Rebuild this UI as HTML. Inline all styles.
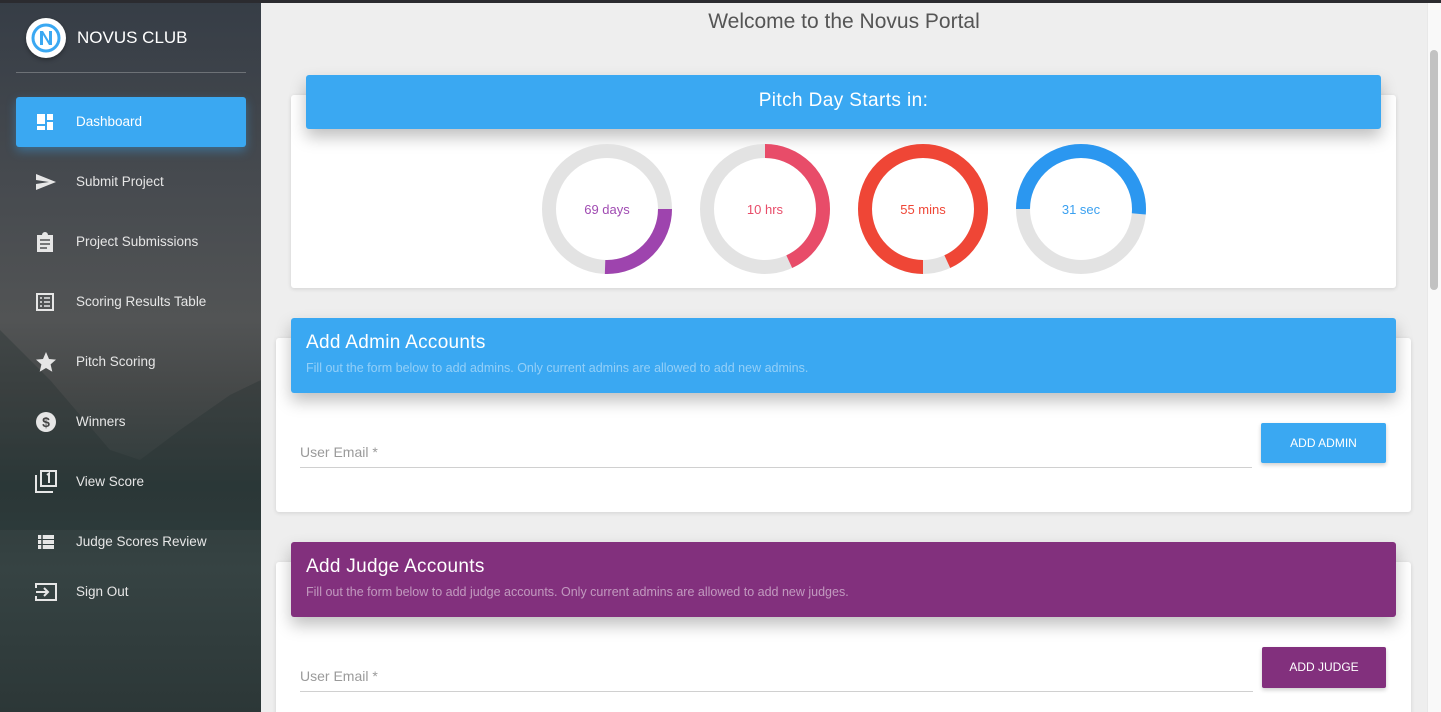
<!DOCTYPE html>
<html><head><meta charset="utf-8"><style>
*{box-sizing:border-box;margin:0;padding:0}
html,body{width:1441px;height:712px;overflow:hidden}
body{background:#eeeeee;font-family:"Liberation Sans",sans-serif;position:relative}
.topbar{position:absolute;left:0;top:0;width:1441px;height:3px;background:#2b2b2f;z-index:10}
.side{position:absolute;left:0;top:0;width:261px;height:712px;background:linear-gradient(180deg,#363d46 0%,#464a4f 25%,#525455 45%,#454848 55%,#2f3b3b 68%,#364343 80%,#2c3737 100%);overflow:hidden}
.logo{position:absolute;left:26px;top:18px;width:40px;height:40px;border-radius:50%;background:#fff;box-shadow:0 2px 4px rgba(0,0,0,.3)}
.brand{position:absolute;left:77px;top:28px;color:#fff;font-size:17px}
.hr{position:absolute;left:16px;top:72px;width:230px;height:1px;background:rgba(255,255,255,.25)}
.active{position:absolute;left:16px;top:97px;width:230px;height:50px;background:#3aa8f2;border-radius:3px;box-shadow:0 4px 10px rgba(58,168,242,.4)}
.nav{position:absolute;left:76px;color:#e6e6e6;font-size:13.5px}
.ic{position:absolute;left:35px}
.title{position:absolute;left:261px;width:1166px;top:10px;text-align:center;font-size:21px;color:#555}
.card{position:absolute;background:#fff;border-radius:3px;box-shadow:0 1px 4px rgba(0,0,0,.12)}
.hdr{position:absolute;border-radius:3px;color:#fff;box-shadow:0 8px 16px rgba(0,0,0,.25)}
.scroll{position:absolute;left:1427px;top:3px;width:14px;height:709px;background:#f9f9f9;border-left:1px solid #e8e8e8}
.thumb{position:absolute;left:1430px;top:50px;width:8px;height:240px;background:#c2c2c2;border-radius:4px}
.lbl{position:absolute;color:#9a9a9a;font-size:14px}
.line{position:absolute;height:1px;background:#d0d0d0}
.btn{position:absolute;color:#fff;font-size:12px;text-align:center;border-radius:2px;box-shadow:0 2px 4px rgba(0,0,0,.2)}
.ht{position:absolute;left:15px;top:14px;font-size:19px;letter-spacing:.3px}
</style></head><body>
<div class="topbar"></div>
<div class="side">
<svg width="261" height="712" style="position:absolute;left:0;top:0">
<polygon points="0,330 50,380 110,450 140,460 180,430 230,395 261,380 261,480 0,480" fill="#263030" opacity=".35"/>
<polygon points="0,480 261,480 261,530 0,530" fill="#203030" opacity=".3"/>
</svg>
<div class="logo"><svg width="40" height="40"><circle cx="20" cy="20" r="13" fill="none" stroke="#3aa8f2" stroke-width="3"/><path d="M14 27V13h3l6 10V13h3v14h-3l-6-10v10z" fill="#3aa8f2"/></svg></div>
<div class="brand">NOVUS CLUB</div>
<div class="hr"></div>
<div class="active"></div>
<svg class="ic" style="top:112px" width="20" height="20"><path d="M2 2h8v10H2zM12 2h6v6h-6zM12 10h6v8h-6zM2 14h8v4H2z" fill="#fff"/></svg>
<div class="nav" style="top:114px;color:#fff">Dashboard</div>
<svg class="ic" style="top:172px" width="22" height="20"><path d="M1 2l20 8-20 8 0-6 13-2-13-2z" fill="#e6e6e6"/></svg>
<div class="nav" style="top:174px">Submit Project</div>
<svg class="ic" style="top:231px" width="20" height="22"><path d="M2 4h5a3 3 0 0 1 6 0h5v17H2z" fill="#e6e6e6"/><path d="M5 9h10M5 13h10M5 17h7" stroke="#505254" stroke-width="1.6"/></svg>
<div class="nav" style="top:234px">Project Submissions</div>
<svg class="ic" style="top:292px" width="20" height="20"><rect x="2" y="2" width="16" height="16" fill="none" stroke="#e6e6e6" stroke-width="2"/><path d="M5 6h2M9 6h6M5 10h2M9 10h6M5 14h2M9 14h6" stroke="#e6e6e6" stroke-width="1.6"/></svg>
<div class="nav" style="top:294px">Scoring Results Table</div>
<svg class="ic" style="top:351px" width="22" height="22"><path d="M11 1l3 7 7 .6-5.4 4.8 1.7 7.4L11 17l-6.3 3.8 1.7-7.4L1 8.6 8 8z" fill="#e6e6e6"/></svg>
<div class="nav" style="top:354px">Pitch Scoring</div>
<svg class="ic" style="top:411px" width="22" height="22"><circle cx="11" cy="11" r="10" fill="#e6e6e6"/><text x="11" y="16" text-anchor="middle" font-size="14" font-weight="bold" fill="#444" font-family="Liberation Sans">$</text></svg>
<div class="nav" style="top:414px">Winners</div>
<svg class="ic" style="top:470px" width="22" height="24"><path d="M1 5v17h17" fill="none" stroke="#e6e6e6" stroke-width="2"/><rect x="6" y="1" width="15" height="15" fill="none" stroke="#e6e6e6" stroke-width="2"/><path d="M12 5l2-1.5V13" stroke="#e6e6e6" stroke-width="2" fill="none"/></svg>
<div class="nav" style="top:474px">View Score</div>
<svg class="ic" style="top:533px" width="20" height="18"><path d="M3 2h16v4H3zM3 7h16v4H3zM3 12h16v4H3z" fill="#e6e6e6"/><path d="M7 2v14" stroke="#3a4444" stroke-width="1.5"/></svg>
<div class="nav" style="top:534px">Judge Scores Review</div>
<svg class="ic" style="top:582px" width="22" height="20"><path d="M1 6V2h20v16H1v-4" fill="none" stroke="#e6e6e6" stroke-width="2"/><path d="M1 10h11M9 6l4 4-4 4" fill="none" stroke="#e6e6e6" stroke-width="2"/></svg>
<div class="nav" style="top:584px">Sign Out</div>
</div>

<div class="title">Welcome to the Novus Portal</div>

<div class="card" style="left:291px;top:95px;width:1105px;height:193px"></div>
<div class="hdr" style="left:306px;top:75px;width:1075px;height:54px;background:#3aa8f2;text-align:center;font-size:19px;line-height:52px;letter-spacing:.4px">Pitch Day Starts in:</div>
<svg style="position:absolute;left:530px;top:130px" width="640" height="160">
<g font-family="Liberation Sans" font-size="13" text-anchor="middle">
<circle cx="77" cy="79" r="58" fill="none" stroke="#e3e3e3" stroke-width="14"/>
<circle cx="77" cy="79" r="58" fill="none" stroke="#9e44ae" stroke-width="14" stroke-dasharray="93 400"/>
<text x="77" y="84" fill="#a04bb2">69 days</text>
<circle cx="235" cy="79" r="58" fill="none" stroke="#e3e3e3" stroke-width="14"/>
<circle cx="235" cy="79" r="58" fill="none" stroke="#e84c69" stroke-width="14" stroke-dasharray="157 400" transform="rotate(-90 235 79)"/>
<text x="235" y="84" fill="#e84c69">10 hrs</text>
<circle cx="393" cy="79" r="58" fill="none" stroke="#e3e3e3" stroke-width="14"/>
<circle cx="393" cy="79" r="58" fill="none" stroke="#ef4636" stroke-width="14" stroke-dasharray="339 400" transform="rotate(90 393 79)"/>
<text x="393" y="84" fill="#ef4636">55 mins</text>
<circle cx="551" cy="79" r="58" fill="none" stroke="#e3e3e3" stroke-width="14"/>
<circle cx="551" cy="79" r="58" fill="none" stroke="#2b97f0" stroke-width="14" stroke-dasharray="187 400" transform="rotate(180 551 79)"/>
<text x="551" y="84" fill="#3aa0f0">31 sec</text>
</g></svg>

<div class="card" style="left:276px;top:338px;width:1135px;height:174px"></div>
<div class="hdr" style="left:291px;top:318px;width:1105px;height:75px;background:#3aa8f2">
<div class="ht">Add Admin Accounts</div>
<div style="position:absolute;left:15px;top:43px;font-size:12.5px;color:rgba(255,255,255,.45)">Fill out the form below to add admins. Only current admins are allowed to add new admins.</div>
</div>
<div class="lbl" style="left:300px;top:444px">User Email *</div>
<div class="line" style="left:300px;top:467px;width:952px"></div>
<div class="btn" style="left:1261px;top:423px;width:125px;height:40px;line-height:40px;background:#3aa8f2">ADD ADMIN</div>

<div class="card" style="left:276px;top:562px;width:1135px;height:160px"></div>
<div class="hdr" style="left:291px;top:542px;width:1105px;height:75px;background:#82307d">
<div class="ht">Add Judge Accounts</div>
<div style="position:absolute;left:15px;top:43px;font-size:12.5px;color:rgba(255,255,255,.5)">Fill out the form below to add judge accounts. Only current admins are allowed to add new judges.</div>
</div>
<div class="lbl" style="left:300px;top:668px">User Email *</div>
<div class="line" style="left:300px;top:691px;width:953px"></div>
<div class="btn" style="left:1262px;top:647px;width:124px;height:41px;line-height:41px;background:#82307d">ADD JUDGE</div>

<div class="scroll"></div>
<div class="thumb"></div>
</body></html>
